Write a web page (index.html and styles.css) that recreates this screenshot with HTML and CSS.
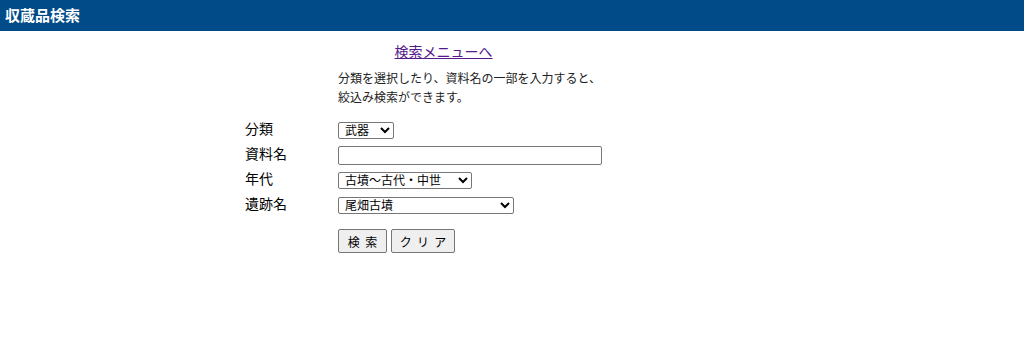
FILE: index.html
```html
<!DOCTYPE html>
<html lang="ja">
<head>
<meta charset="UTF-8">
<meta name="viewport" content="width=device-width, initial-scale=1.0">
<title>収蔵品検索</title>
<link rel="stylesheet" href="styles.css">
</head>
<body>
  <header class="title-bar">収蔵品検索</header>

  <main class="search">
    <div class="menu-link"><a href="#">検索メニューへ</a></div>

    <p class="note">分類を選択したり、資料名の一部を入力すると、<br>絞込み検索ができます。</p>

    <form class="search-form" onsubmit="return false;">
      <label class="label" for="category">分類</label>
      <div class="field">
        <select id="category" class="select-category">
          <option>武器</option>
          <option>土器</option>
          <option>装身具</option>
        </select>
      </div>

      <label class="label" for="name">資料名</label>
      <div class="field">
        <input type="text" id="name" class="text-name">
      </div>

      <label class="label" for="era">年代</label>
      <div class="field">
        <select id="era" class="select-era">
          <option>古墳～古代・中世</option>
          <option>縄文</option>
          <option>弥生</option>
        </select>
      </div>

      <label class="label" for="site">遺跡名</label>
      <div class="field">
        <select id="site" class="select-site">
          <option>尾畑古墳</option>
        </select>
      </div>

      <div class="buttons">
        <button type="submit" class="btn btn-search">検 索</button>
        <button type="reset" class="btn btn-clear">ク リ ア</button>
      </div>
    </form>
  </main>
</body>
</html>
```

FILE: styles.css
```css
* {
  box-sizing: border-box;
}

body {
  margin: 0;
  font-family: "Liberation Sans", "Noto Sans CJK JP", sans-serif;
  color: #000;
  background-color: #fff;
}

.title-bar {
  height: 31px;
  line-height: 31px;
  padding-left: 5px;
  background-color: #004b88;
  color: #fff;
  font-size: 15px;
  font-weight: bold;
}

.search {
  margin-left: 245px;
  width: 397px;
}

.menu-link {
  margin-top: 11px;
  text-align: center;
  font-size: 14px;
  line-height: 20px;
}

.menu-link a {
  color: #551a8b;
}

.note {
  margin: 8px 0 10px 93px;
  font-size: 12px;
  line-height: 19px;
  color: #222;
}

.search-form {
  display: grid;
  grid-template-columns: 93px auto;
  grid-template-rows: repeat(4, 25px) auto;
  align-items: center;
}

.label {
  grid-column: 1;
  font-size: 14px;
  line-height: 18px;
  padding-bottom: 3px;
}

.field {
  grid-column: 2;
}

.field select,
.field input {
  display: block;
  font-family: inherit;
  font-size: 12px;
  margin: 0;
}

.field select {
  height: 17px;
  padding: 0 0 0 2px;
  border: 1px solid #767676;
  border-radius: 2px;
  background-color: #fff;
  color: #000;
}

.select-category {
  width: 56px;
}

.select-era {
  width: 134px;
}

.select-site {
  width: 176px;
}

.text-name {
  width: 264px;
  height: 19px;
  border: 1px solid #767676;
  border-radius: 2px;
}

.buttons {
  grid-column: 2;
  display: flex;
  gap: 4px;
  margin-top: 11px;
  align-self: start;
}

.btn {
  height: 24px;
  padding: 0;
  font-family: inherit;
  font-size: 12px;
  word-spacing: 2px;
  color: #000;
  background-color: #efefef;
  border: 1px solid #767676;
  border-radius: 2px;
}

.btn-search {
  width: 49px;
}

.btn-clear {
  width: 64px;
}
```
